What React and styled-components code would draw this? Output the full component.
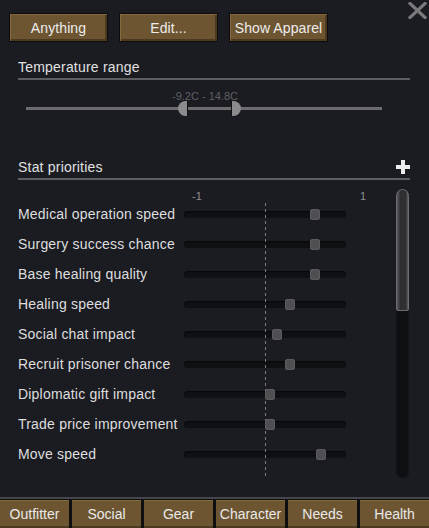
import styled, { createGlobalStyle } from 'styled-components';

const GlobalStyle = createGlobalStyle`
    html, body {
        margin: 0;
        padding: 0;
        background: #1b1c22;
    }
    body {
        font-family: "Liberation Sans", Arial, sans-serif;
    }
`;

const stats = [
    { name: 'Medical operation speed', value: 0.62 },
    { name: 'Surgery success chance', value: 0.62 },
    { name: 'Base healing quality', value: 0.62 },
    { name: 'Healing speed', value: 0.31 },
    { name: 'Social chat impact', value: 0.15 },
    { name: 'Recruit prisoner chance', value: 0.31 },
    { name: 'Diplomatic gift impact', value: 0.06 },
    { name: 'Trade price improvement', value: 0.06 },
    { name: 'Move speed', value: 0.69 },
];

const tabs = ['Outfitter', 'Social', 'Gear', 'Character', 'Needs', 'Health'];

const App = () => {
    return (
        <>
            <GlobalStyle />
            <Window>
                <CloseButton aria-label="close">
                    <svg width="19" height="17" viewBox="0 0 19 17">
                        <path d="M2 1.5 L17 15.5 M17 1.5 L2 15.5" stroke="#7a7a7c" strokeWidth="3.2" strokeLinecap="square" />
                    </svg>
                </CloseButton>

                <TopBar>
                    <WoodButton>Anything</WoodButton>
                    <WoodButton>Edit...</WoodButton>
                    <WoodButton>Show Apparel</WoodButton>
                </TopBar>

                <SectionHeader $top={16}>
                    <span>Temperature range</span>
                </SectionHeader>

                <TempSlider>
                    <RangeLabel>-9.2C - 14.8C</RangeLabel>
                    <RangeTrack />
                    <RangeHandle $side="left" style={{ left: 152 }} />
                    <RangeHandle $side="right" style={{ left: 205 }} />
                </TempSlider>

                <SectionHeader $top={36}>
                    <span>Stat priorities</span>
                    <svg width="14" height="14" viewBox="0 0 14 14">
                        <path d="M5 0 H9 V5 H14 V9 H9 V14 H5 V9 H0 V5 H5 Z" fill="#ededed" />
                    </svg>
                </SectionHeader>

                <StatBody>
                    <StatColumn>
                        <ScaleRow>
                            <ScaleLabel style={{ left: 192 }}>-1</ScaleLabel>
                            <ScaleLabel style={{ left: 360 }}>1</ScaleLabel>
                        </ScaleRow>
                        <StatRows>
                            {stats.map((s) => (
                                <StatRow key={s.name}>
                                    <StatName>{s.name}</StatName>
                                    <StatTrack>
                                        <StatHandle style={{ left: 81 + s.value * 81 - 5 }} />
                                    </StatTrack>
                                </StatRow>
                            ))}
                        </StatRows>
                    </StatColumn>
                    <Scrollbar>
                        <ScrollThumb />
                    </Scrollbar>
                </StatBody>

                <Footer>
                    {tabs.map((t) => (
                        <Tab key={t}>{t}</Tab>
                    ))}
                </Footer>
            </Window>
        </>
    );
};

const Window = styled.div`
    position: relative;
    height: 528px;
    width: 429px;
    display: flex;
    flex-direction: column;
    background: #1b1c22;
    color: #dcdcdc;
    overflow: hidden;
`;

const CloseButton = styled.div`
    position: absolute;
    top: 2px;
    right: 2px;
    width: 19px;
    height: 17px;
    display: flex;
`;

const TopBar = styled.div`
    display: flex;
    gap: 11px;
    padding: 13px 9px 0;
`;

const WoodButton = styled.div`
    box-sizing: border-box;
    width: 99px;
    height: 29px;
    display: flex;
    align-items: center;
    justify-content: center;
    font-size: 14px;
    letter-spacing: 0.1px;
    color: #ececec;
    background: #6d5532;
    border: 1px solid #0c0c0c;
    box-shadow: inset 1px 1px 0 #86693e, inset -2px -2px 0 #4b3a20;
`;

const SectionHeader = styled.div`
    margin: ${(p) => p.$top}px 19px 0 18px;
    line-height: 18px;
    font-size: 14px;
    letter-spacing: 0.2px;
    color: #e0e0e0;
    padding-bottom: 2px;
    border-bottom: 2px solid #5e5e62;
    display: flex;
    justify-content: space-between;
    align-items: center;
`;

const TempSlider = styled.div`
    position: relative;
    margin: 12px 0 0 26px;
    width: 356px;
    height: 30px;
`;

const RangeLabel = styled.div`
    position: absolute;
    top: -2px;
    left: 146px;
    font-size: 11px;
    line-height: 12px;
    color: #5f5f62;
`;

const RangeTrack = styled.div`
    position: absolute;
    top: 15px;
    left: 0;
    right: 0;
    height: 3px;
    background: #6c6c6e;
`;

const RangeHandle = styled.div`
    position: absolute;
    top: 9px;
    width: 9px;
    height: 15px;
    background: #8b8b8d;
    border-radius: ${(p) => (p.$side === 'left' ? '8px 0 0 8px' : '0 8px 8px 0')};
    ${(p) => (p.$side === 'left' ? 'border-right: 1px solid #111;' : 'border-left: 1px solid #111;')}
`;

const StatBody = styled.div`
    flex: 1;
    display: grid;
    grid-template-columns: 1fr 13px;
    padding-right: 20px;
    min-height: 0;
`;

const StatColumn = styled.div`
    display: flex;
    flex-direction: column;
`;

const ScaleRow = styled.div`
    position: relative;
    height: 19px;
`;

const ScaleLabel = styled.span`
    position: absolute;
    top: 10px;
    font-size: 11px;
    line-height: 12px;
    color: #8e8e8e;
`;

const StatRows = styled.div`
    position: relative;
    height: 281px;
    overflow: hidden;

    &::before {
        content: '';
        position: absolute;
        left: 265px;
        top: 4px;
        bottom: 2px;
        width: 1px;
        z-index: 1;
        background: repeating-linear-gradient(to bottom, #7c7c7e 0 3px, transparent 3px 6px);
    }
`;

const StatRow = styled.div`
    display: flex;
    align-items: center;
    height: 30px;
    padding-left: 18px;
`;

const StatName = styled.div`
    width: 166px;
    font-size: 14px;
    letter-spacing: 0.2px;
    line-height: 30px;
    color: #dedede;
    white-space: nowrap;
`;

const StatTrack = styled.div`
    position: relative;
    width: 162px;
    height: 7px;
    border-radius: 4px;
    background: #0f1013;
    box-shadow: inset 0 1px 1px #08080a;
`;

const StatHandle = styled.div`
    position: absolute;
    top: -2px;
    width: 10px;
    height: 11px;
    border-radius: 3px;
    background: #4f4f53;
    box-shadow: inset 0 0 0 1px #5c5c60;
    z-index: 2;
`;

const Scrollbar = styled.div`
    margin-top: 9px;
    height: 289px;
    border-radius: 7px;
    background: #0e0f12;
    box-shadow: inset 0 0 0 1px #141519;
    display: flex;
    flex-direction: column;
`;

const ScrollThumb = styled.div`
    height: 122px;
    box-sizing: border-box;
    border-radius: 7px 7px 2px 2px;
    border: 1px solid #6d6d70;
    background: linear-gradient(to right, #5c5c60, #2a2a2e 35%, #333337 55%, #2a2a2e 75%, #5c5c60);
`;

const Footer = styled.div`
    display: grid;
    grid-template-columns: repeat(6, 1fr);
    gap: 3px;
    border-top: 2px solid #46474c;
    padding-top: 1px;
    background: #0f0f10;
`;

const Tab = styled.div`
    height: 28px;
    display: flex;
    align-items: center;
    justify-content: center;
    font-size: 14px;
    color: #e9e9e9;
    background: #6d5532;
    box-shadow: inset 0 1px 0 #86693e, inset 0 -2px 0 #4b3a20;
`;

export default App;
